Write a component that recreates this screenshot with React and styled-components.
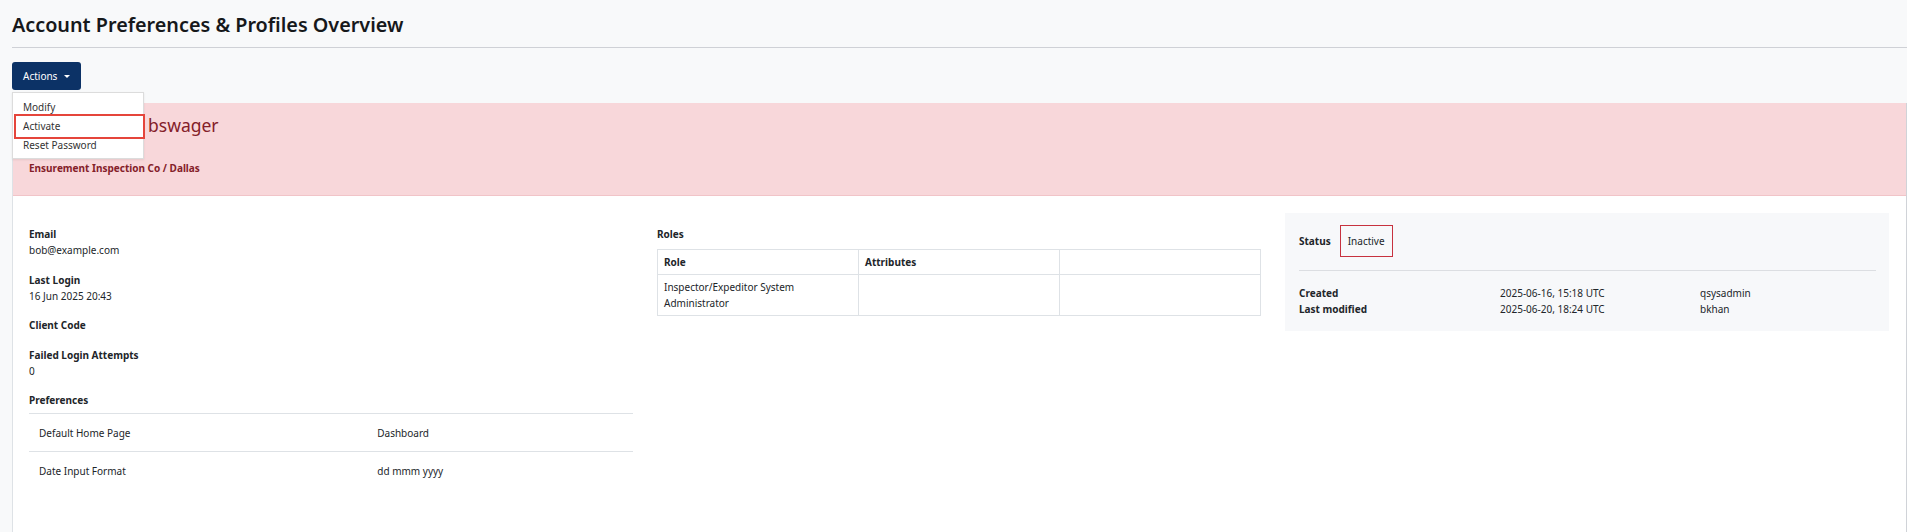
import React from "react";
import styled, { createGlobalStyle } from "styled-components";

const GlobalStyle = createGlobalStyle`
  body {
    margin: 0;
    background: #f8f9fa;
    color: #212529;
    font-family: "Noto Sans", "Open Sans", sans-serif;
    font-size: 10px;
  }
`;

const Page = styled.div`
  padding-left: 12px;
`;

const Header = styled.header`
  border-bottom: 1px solid #cfd1d6;
  padding: 11px 0 8px;
`;

const Title = styled.h1`
  margin: 0;
  font-size: 19.8px;
  line-height: 28px;
  font-weight: 600;
  color: #16181b;
`;

const Toolbar = styled.div`
  position: relative;
  margin-top: 14px;
  width: max-content;
`;

const ActionButton = styled.button`
  display: flex;
  align-items: center;
  height: 28px;
  padding: 0 11px;
  border: 0;
  border-radius: 3px;
  background: #0c3266;
  color: #fff;
  font-family: inherit;
  font-size: 10px;
  cursor: pointer;
`;

const Caret = styled.span`
  margin-left: 7px;
  border-top: 3px solid #fff;
  border-left: 3px solid transparent;
  border-right: 3px solid transparent;
`;

const Menu = styled.ul`
  position: absolute;
  z-index: 5;
  top: 30px;
  left: 0;
  width: 130px;
  margin: 0;
  padding: 5px 0 3px;
  list-style: none;
  background: #fff;
  border: 1px solid #dcdcdc;
  box-shadow: 0 1px 2px rgba(0, 0, 0, 0.08);
`;

const MenuItem = styled.li`
  position: relative;
  padding: 2px 10px;
  line-height: 15px;
  color: #333;
  cursor: pointer;

  ${({ $marked }) =>
    $marked &&
    `
    &::after {
      content: "";
      position: absolute;
      top: -3px;
      bottom: -3px;
      left: 1px;
      right: -2px;
      border: 2.5px solid #e5453b;
      pointer-events: none;
    }
  `}
`;

const Card = styled.section`
  margin-top: 13px;
  background: #fff;
  border: 1px solid #dee2e6;
  border-right-color: #d0d3d8;
  border-top: 0;
  min-height: 440px;
`;

const CardHeader = styled.div`
  background: #f8d7da;
  border-bottom: 1px solid #f1c4c8;
  padding: 9px 16px 19px;
  color: #842029;
`;

const UserName = styled.h2`
  margin: 0;
  padding-left: 119px;
  font-size: 17.5px;
  line-height: 26px;
  font-weight: 400;
`;

const Company = styled.div`
  margin-top: 22px;
  font-weight: 700;
  line-height: 16px;
`;

const CardBody = styled.div`
  display: grid;
  grid-template-columns: repeat(3, 604px);
  column-gap: 24px;
  padding: 17px 17px 0 16px;
  align-items: start;
`;

const Column = styled.div`
  padding-top: ${({ $offset }) => $offset || 0}px;
`;

const Field = styled.div`
  margin-bottom: 13.5px;
  line-height: 16px;
`;

const Label = styled.div`
  font-weight: 700;
`;

const Value = styled.div``;

const PrefTable = styled.table`
  width: 100%;
  border-collapse: collapse;
  margin-top: 5px;

  td {
    border-top: 1px solid #dee2e6;
    padding: 0 10px;
    height: 37px;
    line-height: 16px;
  }

  td:first-child {
    width: 56%;
  }
`;

const SectionLabel = styled.div`
  font-weight: 700;
  line-height: 16px;
`;

const RoleTable = styled.table`
  width: 100%;
  margin-top: 7px;
  border-collapse: collapse;
  table-layout: fixed;

  th,
  td {
    border: 1px solid #dee2e6;
    padding: 4px 6px;
    text-align: left;
    vertical-align: top;
    line-height: 16px;
  }

  th {
    font-weight: 700;
    height: 16px;
  }
`;

const StatusCard = styled.div`
  background: #f7f8fa;
  padding: 12px 13px 14px 14px;
`;

const StatusRow = styled.div`
  display: flex;
  align-items: center;
  gap: 9px;
  padding-bottom: 13px;
  border-bottom: 1px solid #dcdee2;
`;

const StatusBox = styled.div`
  display: flex;
  align-items: center;
  height: 30px;
  padding: 0 7px;
  border: 1px solid #c7323f;
`;

const AuditGrid = styled.div`
  display: grid;
  grid-template-columns: 201px 200px 1fr;
  margin-top: 14px;
  line-height: 16px;
`;

const AuditLabel = styled.div`
  font-weight: 700;
`;

const prefs = [
  ["Default Home Page", "Dashboard"],
  ["Date Input Format", "dd mmm yyyy"],
];

const audit = [
  ["Created", "2025-06-16, 15:18 UTC", "qsysadmin"],
  ["Last modified", "2025-06-20, 18:24 UTC", "bkhan"],
];

export default function App() {
  return (
    <Page>
      <GlobalStyle />
      <Header>
        <Title>Account Preferences &amp; Profiles Overview</Title>
      </Header>

      <Toolbar>
        <ActionButton>
          Actions <Caret />
        </ActionButton>
        <Menu>
          <MenuItem>Modify</MenuItem>
          <MenuItem $marked>Activate</MenuItem>
          <MenuItem>Reset Password</MenuItem>
        </Menu>
      </Toolbar>

      <Card>
        <CardHeader>
          <UserName>bswager</UserName>
          <Company>Ensurement Inspection Co / Dallas</Company>
        </CardHeader>

        <CardBody>
          <Column $offset={13}>
            <Field>
              <Label>Email</Label>
              <Value>bob@example.com</Value>
            </Field>
            <Field>
              <Label>Last Login</Label>
              <Value>16 Jun 2025 20:43</Value>
            </Field>
            <Field>
              <Label>Client Code</Label>
            </Field>
            <Field>
              <Label>Failed Login Attempts</Label>
              <Value>0</Value>
            </Field>
            <SectionLabel>Preferences</SectionLabel>
            <PrefTable>
              <tbody>
                {prefs.map(([k, v]) => (
                  <tr key={k}>
                    <td>{k}</td>
                    <td>{v}</td>
                  </tr>
                ))}
              </tbody>
            </PrefTable>
          </Column>

          <Column $offset={13}>
            <SectionLabel>Roles</SectionLabel>
            <RoleTable>
              <thead>
                <tr>
                  <th>Role</th>
                  <th>Attributes</th>
                  <th></th>
                </tr>
              </thead>
              <tbody>
                <tr>
                  <td>Inspector/Expeditor System Administrator</td>
                  <td></td>
                  <td></td>
                </tr>
              </tbody>
            </RoleTable>
          </Column>

          <Column>
            <StatusCard>
              <StatusRow>
                <AuditLabel>Status</AuditLabel>
                <StatusBox>Inactive</StatusBox>
              </StatusRow>
              <AuditGrid>
                {audit.map(([label, when, who]) => (
                  <React.Fragment key={label}>
                    <AuditLabel>{label}</AuditLabel>
                    <div>{when}</div>
                    <div>{who}</div>
                  </React.Fragment>
                ))}
              </AuditGrid>
            </StatusCard>
          </Column>
        </CardBody>
      </Card>
    </Page>
  );
}
